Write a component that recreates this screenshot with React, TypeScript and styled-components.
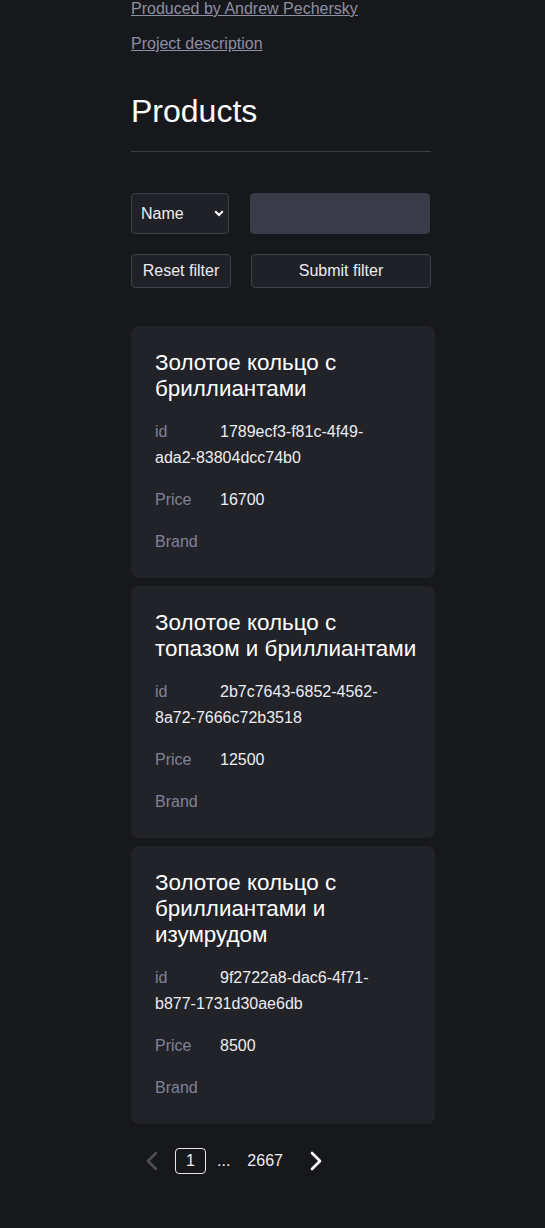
import React from "react";
import styled, { createGlobalStyle } from "styled-components";

const Global = createGlobalStyle`
  html, body { margin: 0; padding: 0; background: #17181c; }
  body { font-family: "Liberation Sans", Arial, sans-serif; color: #ececf1; }
  * { box-sizing: border-box; }
`;

const Page = styled.div`
  padding: 0 0 40px 131px;
  min-height: 1228px;
`;

const Main = styled.div`
  width: 304px;
`;

const Header = styled.div`
  width: 300px;
`;

const LinkLine = styled.p`
  margin: 0 0 17px;
  font-size: 16px;
  line-height: 18px;
`;

const A = styled.a`
  color: #8e8fa3;
  text-decoration: underline;
`;

const Title = styled.h1`
  margin: 40px 0 0;
  font-size: 32px;
  font-weight: 400;
  line-height: 36px;
  color: #ffffff;
`;

const Rule = styled.hr`
  margin: 22px 0 0;
  border: 0;
  height: 1px;
  background: #3c3d45;
`;

const FilterRow = styled.div<{ $gap: number; $top: number }>`
  display: flex;
  gap: ${(p) => p.$gap}px;
  margin-top: ${(p) => p.$top}px;
`;

const SelectWrap = styled.div`
  position: relative;
  width: 98px;
  height: 41px;
`;

const Select = styled.select`
  appearance: none;
  width: 100%;
  height: 100%;
  background: #202127;
  border: 1px solid #40414a;
  border-radius: 4px;
  color: #ececf1;
  font-family: "Liberation Sans", Arial, sans-serif;
  font-size: 16px;
  padding: 0 0 0 9px;
`;

const Caret = styled.svg`
  position: absolute;
  right: 5px;
  top: 17px;
  pointer-events: none;
`;

const Input = styled.input`
  width: 180px;
  height: 41px;
  background: #3a3b48;
  border: 1px solid #3a3b48;
  border-radius: 4px;
  color: #fff;
  font-size: 16px;
`;

const Button = styled.button<{ $w: number }>`
  width: ${(p) => p.$w}px;
  height: 34px;
  background: #202127;
  border: 1px solid #40414a;
  border-radius: 4px;
  color: #ececf1;
  font-family: "Liberation Sans", Arial, sans-serif;
  font-size: 16px;
  padding: 0;
`;

const List = styled.div`
  display: flex;
  flex-direction: column;
  gap: 8px;
  margin-top: 38px;
`;

const Card = styled.div`
  background: #222329;
  border-radius: 8px;
  padding: 24px 24px 23px;
`;

const CardTitle = styled.h2`
  margin: 0 -8px 17px 0;
  font-size: 22.4px;
  font-weight: 400;
  line-height: 26px;
  color: #ffffff;
`;

const Field = styled.div`
  margin-top: 16px;
  padding-right: 10px;
  font-size: 16px;
  line-height: 26px;
  color: #ececf1;
  word-break: break-word;
`;

const Label = styled.span`
  display: inline-block;
  width: 65px;
  color: #80819a;
`;

const Pager = styled.div`
  display: flex;
  align-items: center;
  margin-top: 23px;
  padding-left: 5px;
  height: 28px;
  font-size: 16px;
  color: #ececf1;
`;

const Arrow = styled.span<{ $on: boolean; $ml: number }>`
  display: flex;
  margin-left: ${(p) => p.$ml}px;
  color: ${(p) => (p.$on ? "#ffffff" : "#4c4d55")};
`;

const PageBox = styled.span<{ $active?: boolean; $ml: number }>`
  display: inline-flex;
  align-items: center;
  justify-content: center;
  margin-left: ${(p) => p.$ml}px;
  min-width: ${(p) => (p.$active ? 31 : 0)}px;
  height: 26px;
  border: 1px solid ${(p) => (p.$active ? "#e6e6ea" : "transparent")};
  border-radius: 4px;
`;

const Chevron = ({ dir }: { dir: "l" | "r" }) => (
  <svg width="32" height="32" viewBox="0 0 24 24" fill="none" stroke="currentColor" strokeWidth="2" strokeLinecap="round" strokeLinejoin="round">
    <path d={dir === "l" ? "m15 18-6-6 6-6" : "m9 18 6-6-6-6"} />
  </svg>
);

const products = [
  { name: "Золотое кольцо с бриллиантами", id: "1789ecf3-f81c-4f49-ada2-83804dcc74b0", price: "16700" },
  { name: "Золотое кольцо с топазом и бриллиантами", id: "2b7c7643-6852-4562-8a72-7666c72b3518", price: "12500" },
  { name: "Золотое кольцо с бриллиантами и изумрудом", id: "9f2722a8-dac6-4f71-b877-1731d30ae6db", price: "8500" },
];

export default function App() {
  return (
    <Page>
      <Global />
      <Main>
        <Header>
          <LinkLine><A href="#">Produced by Andrew Pechersky</A></LinkLine>
          <LinkLine><A href="#">Project description</A></LinkLine>
          <Title>Products</Title>
          <Rule />
          <FilterRow $gap={21} $top={41}>
            <SelectWrap>
              <Select defaultValue="name">
                <option value="name">Name</option>
              </Select>
              <Caret width="10" height="7" viewBox="0 0 10 7">
                <path d="M1.2 1.2l3.8 3.8L8.8 1.2" stroke="#fff" strokeWidth="2" fill="none" />
              </Caret>
            </SelectWrap>
            <Input />
          </FilterRow>
          <FilterRow $gap={20} $top={20}>
            <Button $w={100}>Reset filter</Button>
            <Button $w={180}>Submit filter</Button>
          </FilterRow>
        </Header>
        <List>
          {products.map((p) => (
            <Card key={p.id}>
              <CardTitle>{p.name}</CardTitle>
              <Field><Label>id</Label>{p.id}</Field>
              <Field><Label>Price</Label>{p.price}</Field>
              <Field><Label>Brand</Label></Field>
            </Card>
          ))}
        </List>
        <Pager>
          <Arrow $on={false} $ml={0}><Chevron dir="l" /></Arrow>
          <PageBox $active $ml={7}>1</PageBox>
          <PageBox $ml={10}>...</PageBox>
          <PageBox $ml={15}>2667</PageBox>
          <Arrow $on={true} $ml={16}><Chevron dir="r" /></Arrow>
        </Pager>
      </Main>
    </Page>
  );
}
